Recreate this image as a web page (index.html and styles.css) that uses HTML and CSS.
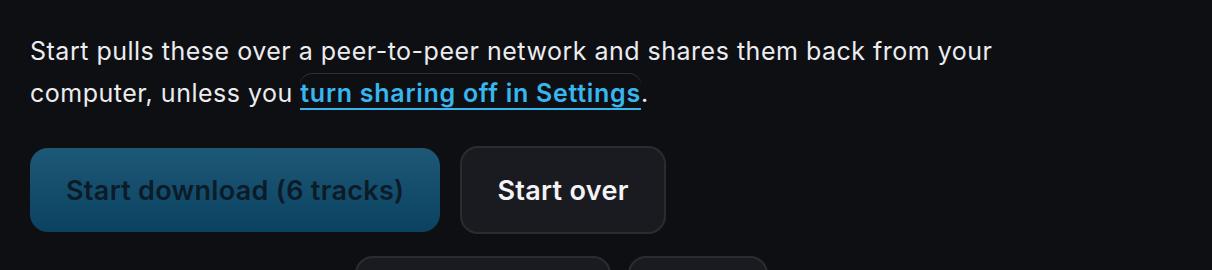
FILE: index.html
```html
<!DOCTYPE html>
<html lang="en">
<head>
  <meta charset="UTF-8">
  <meta name="viewport" content="width=device-width, initial-scale=1.0">
  <title>Start download</title>
  <link rel="stylesheet" href="styles.css">
</head>
<body>
  <div class="panel">
    <p class="note">
      Start pulls these over a peer-to-peer network and shares them back from your<br>
      computer, unless you <a href="#settings" class="inline-link">turn sharing off in Settings</a>.
    </p>

    <div class="actions">
      <button type="button" class="btn btn-primary">Start download (6 tracks)</button>
      <button type="button" class="btn btn-ghost">Start over</button>
    </div>

    <!-- next row, cut off by the window -->
    <div class="actions actions-more">
      <button type="button" class="btn btn-ghost btn-wide">&nbsp;</button>
      <button type="button" class="btn btn-ghost btn-small">&nbsp;</button>
    </div>
  </div>
</body>
</html>
```

FILE: styles.css
```css
body {
  margin: 0;
  padding: 0;
  background-color: #0e0f13;
  color: #ececef;
  font-family: Inter, "Noto Sans", sans-serif;
}

.panel {
  padding: 30px 30px 0;
}

.note {
  margin: 0;
  font-size: 25px;
  letter-spacing: 0.5px;
  line-height: 42px;
}

.inline-link {
  color: #38b6ef;
  font-weight: 600;
  letter-spacing: 0.72px;
  text-decoration: none;
  padding: 5px 0 0;
  border-bottom: 2px solid #38b6ef;
  border-radius: 12px 12px 0 0;
  box-shadow: inset 0 1px 0 rgba(255, 255, 255, 0.14);
}

.actions {
  display: flex;
  align-items: center;
  gap: 20px;
  margin-top: 32px;
}

.btn {
  font-family: Inter, "Noto Sans", sans-serif;
  font-size: 27px;
  font-weight: 600;
  letter-spacing: 0.3px;
  border-radius: 18px;
  cursor: pointer;
}

.btn-primary {
  height: 84px;
  padding: 0 36px;
  border: none;
  color: #0b1b28;
  background: linear-gradient(#1e5877, #0b4262);
}

.btn-ghost {
  height: 88px;
  padding: 0 35px;
  border: 2px solid #2b2c32;
  color: #f4f4f7;
  background-color: #1a1b20;
}

.actions-more {
  gap: 17px;
  margin-top: 22px;
  margin-left: 325px;
}

.btn-wide {
  width: 256px;
}

.btn-small {
  width: 140px;
}
```
